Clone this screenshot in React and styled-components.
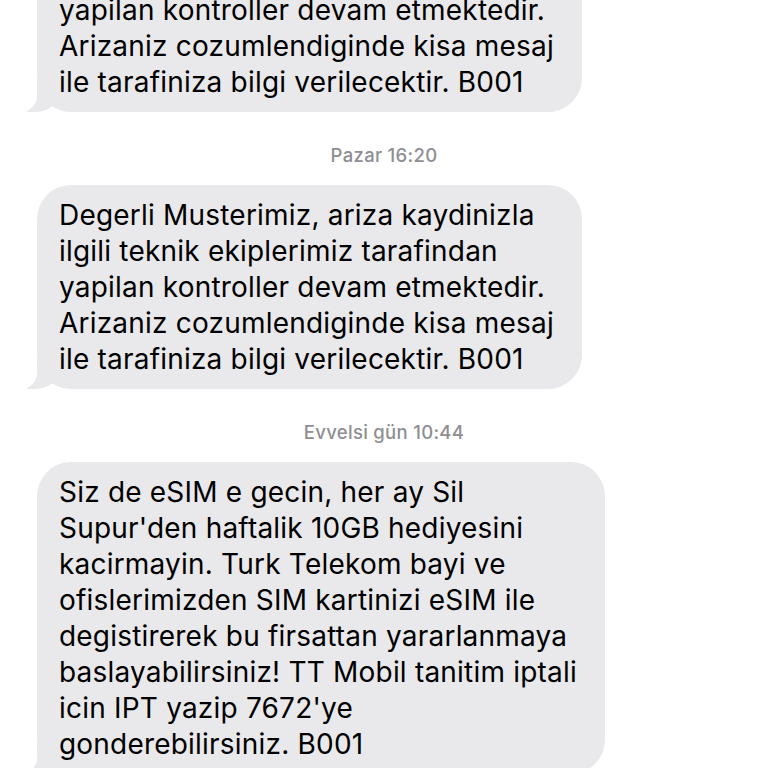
import React from "react";
import styled, { createGlobalStyle } from "styled-components";

const messages = [
  {
    stamp: null,
    text:
      "Degerli Musterimiz, ariza kaydinizla\nilgili teknik ekiplerimiz tarafindan\nyapilan kontroller devam etmektedir.\nArizaniz cozumlendiginde kisa mesaj\nile tarafiniza bilgi verilecektir. B001",
  },
  {
    stamp: "Pazar 16:20",
    text:
      "Degerli Musterimiz, ariza kaydinizla\nilgili teknik ekiplerimiz tarafindan\nyapilan kontroller devam etmektedir.\nArizaniz cozumlendiginde kisa mesaj\nile tarafiniza bilgi verilecektir. B001",
  },
  {
    stamp: "Evvelsi gün 10:44",
    text:
      "Siz de eSIM e gecin, her ay Sil\nSupur'den haftalik 10GB hediyesini\nkacirmayin. Turk Telekom bayi ve\nofislerimizden SIM kartinizi eSIM ile\ndegistirerek bu firsattan yararlanmaya\nbaslayabilirsiniz! TT Mobil tanitim iptali\nicin IPT yazip 7672'ye\ngonderebilirsiniz. B001",
  },
];

const App = () => {
  return (
    <>
      <GlobalStyle />
      <Thread>
        {messages.map((m, i) => (
          <React.Fragment key={i}>
            {m.stamp && <Stamp>{m.stamp}</Stamp>}
            <Bubble $first={i === 0}>
              <BubbleText>{m.text}</BubbleText>
            </Bubble>
          </React.Fragment>
        ))}
      </Thread>
    </>
  );
};

const GlobalStyle = createGlobalStyle`
  html, body {
    margin: 0;
    padding: 0;
    background: #ffffff;
    height: 768px;
    overflow: hidden;
  }
`;

const Thread = styled.div`
  display: flex;
  flex-direction: column;
  align-items: flex-start;
  padding: 0 37px;
  font-family: "Inter", "Liberation Sans", sans-serif;
`;

const Stamp = styled.div`
  align-self: center;
  margin: 32px 0 19px;
  font-size: 18.5px;
  line-height: 22px;
  font-weight: 500;
  letter-spacing: 0.3px;
  color: #8e8e93;
`;

const Bubble = styled.div`
  position: relative;
  margin-top: ${(p) => (p.$first ? "-92px" : "0")};
  padding: 12px 28px 12px 22px;
  background: #e9e9eb;
  border-radius: 34px;
  color: #000000;

  &::before {
    content: "";
    position: absolute;
    bottom: 0;
    left: -10px;
    width: 34px;
    height: 32px;
    background: #e9e9eb;
    border-bottom-right-radius: 26px 22px;
  }

  &::after {
    content: "";
    position: absolute;
    bottom: 0;
    left: -18px;
    width: 18px;
    height: 34px;
    background: #ffffff;
    border-bottom-right-radius: 16px;
  }
`;

const BubbleText = styled.div`
  position: relative;
  z-index: 1;
  white-space: pre-line;
  font-size: 28px;
  line-height: 36px;
  letter-spacing: 0.2px;
`;

export default App;
